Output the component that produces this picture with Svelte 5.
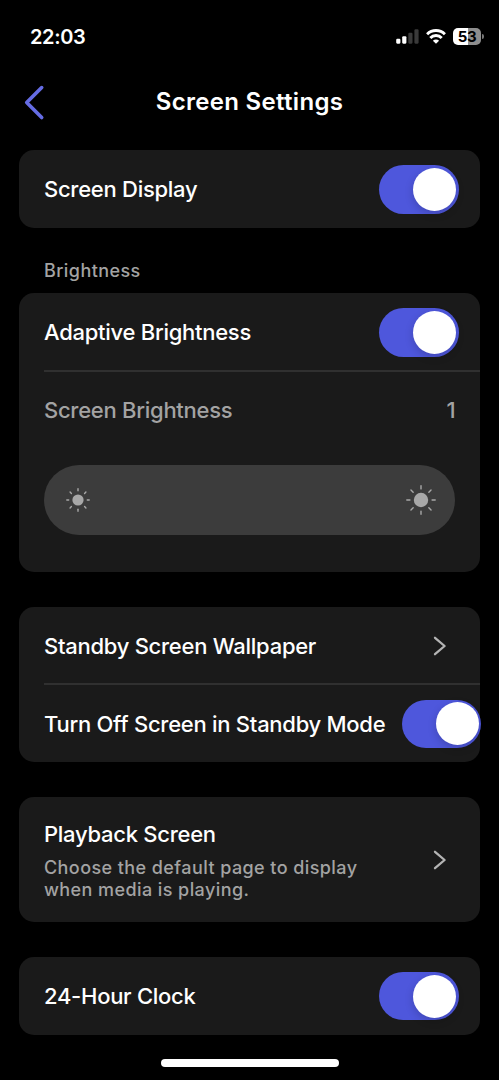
<script>
	let time = '22:03';
	let battery = 53;
	let brightness = 1;
	let screenDisplay = true;
	let adaptive = true;
	let standbyOff = true;
	let clock24 = true;

	// small and large sun at the ends of the slider
	const suns = [
		{ name: 'low', size: 26, r: 5.6, from: 9.3, to: 11.2, stroke: 1.4 },
		{ name: 'high', size: 32, r: 7.2, from: 11.1, to: 14.2, stroke: 1.4 }
	];
	const angles = [0, 45, 90, 135, 180, 225, 270, 315];
</script>

{#snippet toggle(on, flip, label)}
	<button class="toggle" class:on role="switch" aria-checked={on} aria-label={label} on:click={flip}>
		<span class="knob"></span>
	</button>
{/snippet}

{#snippet chevron()}
	<svg class="chevron" width="14" height="20" viewBox="0 0 14 20">
		<path d="M2 1.8 L11.6 10 L2 18.2" />
	</svg>
{/snippet}

<main>
	<div class="status">
		<span class="time">{time}</span>
		<div class="status-icons">
			<svg width="24" height="16" viewBox="0 0 24 16">
				<rect x="0.2" y="9.8" width="4.2" height="4.9" rx="1.1" fill="#fff" />
				<rect x="6.2" y="7.2" width="4.2" height="7.5" rx="1.1" fill="#fff" />
				<rect x="12.3" y="3.8" width="4.2" height="10.9" rx="1.1" fill="#3a3a3a" />
				<rect x="18.4" y="0.3" width="4.2" height="14.4" rx="1.1" fill="#3a3a3a" />
			</svg>
			<svg class="wifi" width="20" height="15" viewBox="0 0 20 15">
				<path d="M1.1 5.2 A12.6 12.6 0 0 1 18.9 5.2" />
				<path d="M4.3 8.9 A7.9 7.9 0 0 1 15.7 8.9" />
				<path class="dot" d="M10 14.7 L6.9 11.7 A4.3 4.3 0 0 1 13.1 11.7 Z" />
			</svg>
			<div class="battery">
				<div class="level"><span>{battery}</span></div>
				<span class="cap"></span>
			</div>
		</div>
	</div>

	<header>
		<button class="back" aria-label="Back">
			<svg width="22" height="36" viewBox="0 0 22 36">
				<path d="M18.7 2.6 L3.7 17.6 L18.7 32.6" />
			</svg>
		</button>
		<h1>Screen Settings</h1>
	</header>

	<section class="card">
		<div class="row">
			<span class="label">Screen Display</span>
			{@render toggle(screenDisplay, () => (screenDisplay = !screenDisplay), 'Screen Display')}
		</div>
	</section>

	<h2>Brightness</h2>
	<section class="card brightness">
		<div class="row">
			<span class="label">Adaptive Brightness</span>
			{@render toggle(adaptive, () => (adaptive = !adaptive), 'Adaptive Brightness')}
		</div>
		<div class="divider"></div>
		<div class="row muted">
			<span class="label">Screen Brightness</span>
			<span class="value">{brightness}</span>
		</div>
		<div class="slider">
			{#each suns as sun}
				<svg class={sun.name} width={sun.size} height={sun.size} viewBox="-{sun.size / 2} -{sun.size / 2} {sun.size} {sun.size}">
					<circle r={sun.r} />
					{#each angles as angle}
						<line x1={sun.from} x2={sun.to} stroke-width={sun.stroke} transform="rotate({angle})" />
					{/each}
				</svg>
			{/each}
		</div>
	</section>

	<section class="card standby">
		<div class="row">
			<span class="label">Standby Screen Wallpaper</span>
			{@render chevron()}
		</div>
		<div class="divider"></div>
		<div class="row wide">
			<span class="label">Turn Off Screen in Standby Mode</span>
			{@render toggle(standbyOff, () => (standbyOff = !standbyOff), 'Turn Off Screen in Standby Mode')}
		</div>
	</section>

	<section class="card playback">
		<div class="row">
			<div>
				<span class="label">Playback Screen</span>
				<p>Choose the default page to display<br />when media is playing.</p>
			</div>
			{@render chevron()}
		</div>
	</section>

	<section class="card">
		<div class="row">
			<span class="label">24-Hour Clock</span>
			{@render toggle(clock24, () => (clock24 = !clock24), '24-Hour Clock')}
		</div>
	</section>

	<div class="home"></div>
</main>

<style>
	:global(body) {
		background: #000;
	}
	main {
		box-sizing: border-box;
		width: 499px;
		height: 1080px;
		overflow: hidden;
		background: #000;
		color: #fff;
		font-family: Inter, 'Liberation Sans', sans-serif;
		display: flex;
		flex-direction: column;
	}
	button {
		border: 0;
		padding: 0;
		background: none;
	}
	svg {
		display: block;
		flex: none;
	}
	.status {
		height: 73px;
		box-sizing: border-box;
		padding: 0 15px 0 30px;
		display: flex;
		justify-content: space-between;
		align-items: center;
	}
	.time {
		font-size: 20px;
		font-weight: 600;
		letter-spacing: -0.35px;
	}
	.status-icons {
		display: flex;
		align-items: center;
	}
	.wifi {
		margin: 0 7px 0 6px;
		fill: none;
		stroke: #fff;
		stroke-width: 2.9;
	}
	.wifi .dot {
		fill: #fff;
		stroke: none;
	}
	.battery {
		display: flex;
		align-items: center;
		gap: 1px;
	}
	.level {
		width: 28px;
		height: 16.5px;
		border-radius: 5px;
		background: linear-gradient(90deg, #fff 53%, #8e8e8e 53%);
		color: #000;
		font-size: 15px;
		font-weight: 700;
		line-height: 17px;
		letter-spacing: -0.5px;
		text-align: center;
	}
	.cap {
		width: 2px;
		height: 5px;
		border-radius: 0 2px 2px 0;
		background: #777;
	}
	header {
		height: 77.4px;
		display: grid;
		grid-template-columns: 60px 1fr 60px;
		align-items: start;
	}
	.back {
		margin: 11.5px 0 0 23px;
		width: 22px;
	}
	.back path {
		fill: none;
		stroke: #656ce4;
		stroke-width: 3.6;
		stroke-linecap: round;
		stroke-linejoin: round;
	}
	h1 {
		margin: 14px 0 0;
		font-size: 24px;
		line-height: 30px;
		font-weight: 600;
		letter-spacing: 0.3px;
		text-align: center;
	}
	h2 {
		margin: 31.2px 0 10px 44px;
		font-size: 18px;
		line-height: 24px;
		font-weight: 500;
		letter-spacing: 0.43px;
		color: #a3a3a3;
	}
	.card {
		flex: none;
		margin: 0 19px;
		border-radius: 15px;
		background: #1a1a1a;
	}
	.row {
		display: flex;
		align-items: center;
		justify-content: space-between;
		height: 77.8px;
		padding: 0 21.4px 0 25px;
	}
	.label {
		font-size: 22px;
		line-height: 28px;
		font-weight: 500;
		letter-spacing: -0.27px;
		white-space: nowrap;
	}
	.muted {
		color: #a3a3a3;
		font-size: 22px;
		font-weight: 500;
	}
	.value {
		margin-right: 3px;
	}
	.divider {
		height: 2px;
		margin: -1px 0 -1px 25px;
		background: #303030;
	}
	.toggle {
		flex: none;
		width: 79.5px;
		height: 48.5px;
		border-radius: 25px;
		background: #39393d;
		display: flex;
		align-items: center;
		box-sizing: border-box;
		padding: 0 2.5px;
		margin-top: 0.6px;
	}
	.toggle.on {
		background: #4e57dc;
		justify-content: flex-end;
	}
	.knob {
		width: 43px;
		height: 43px;
		border-radius: 50%;
		background: #fff;
		box-shadow: 0 3px 9px rgba(0, 0, 0, 0.18);
	}
	.chevron {
		margin-right: 11.8px;
	}
	.chevron path {
		fill: none;
		stroke: #b4b4b4;
		stroke-width: 2.3;
		stroke-linecap: round;
		stroke-linejoin: round;
	}
	.brightness {
		height: 279px;
	}
	.slider {
		height: 70px;
		margin: 15.8px 25px 0;
		box-sizing: border-box;
		padding: 0 18px 0 21px;
		border-radius: 35px;
		background: #3c3c3c;
		display: flex;
		align-items: center;
		justify-content: space-between;
	}
	.slider circle {
		fill: #a8a8a8;
	}
	.slider line {
		stroke: #a8a8a8;
		stroke-linecap: round;
	}
	.standby {
		margin-top: 34.3px;
	}
	.standby .row {
		height: 77.6px;
	}
	.standby .label,
	.standby .chevron {
		margin-top: 1px;
	}
	.standby .toggle {
		margin-top: 1.4px;
	}
	.wide {
		padding-right: 0;
		margin-right: -1px;
	}
	.playback {
		margin-top: 34.8px;
		margin-bottom: 34.8px;
	}
	.playback .row {
		height: 125.5px;
	}
	.playback .row > div {
		padding-top: 1.4px;
	}
	.playback .chevron {
		margin-top: 1px;
	}
	p {
		margin: 9px 0 0;
		font-size: 18px;
		line-height: 22px;
		font-weight: 500;
		letter-spacing: 0.42px;
		color: #a3a3a3;
	}
	.home {
		flex: none;
		width: 178px;
		height: 8px;
		margin: 24.6px 0 0 160.5px;
		border-radius: 4px;
		background: #fff;
	}
</style>
